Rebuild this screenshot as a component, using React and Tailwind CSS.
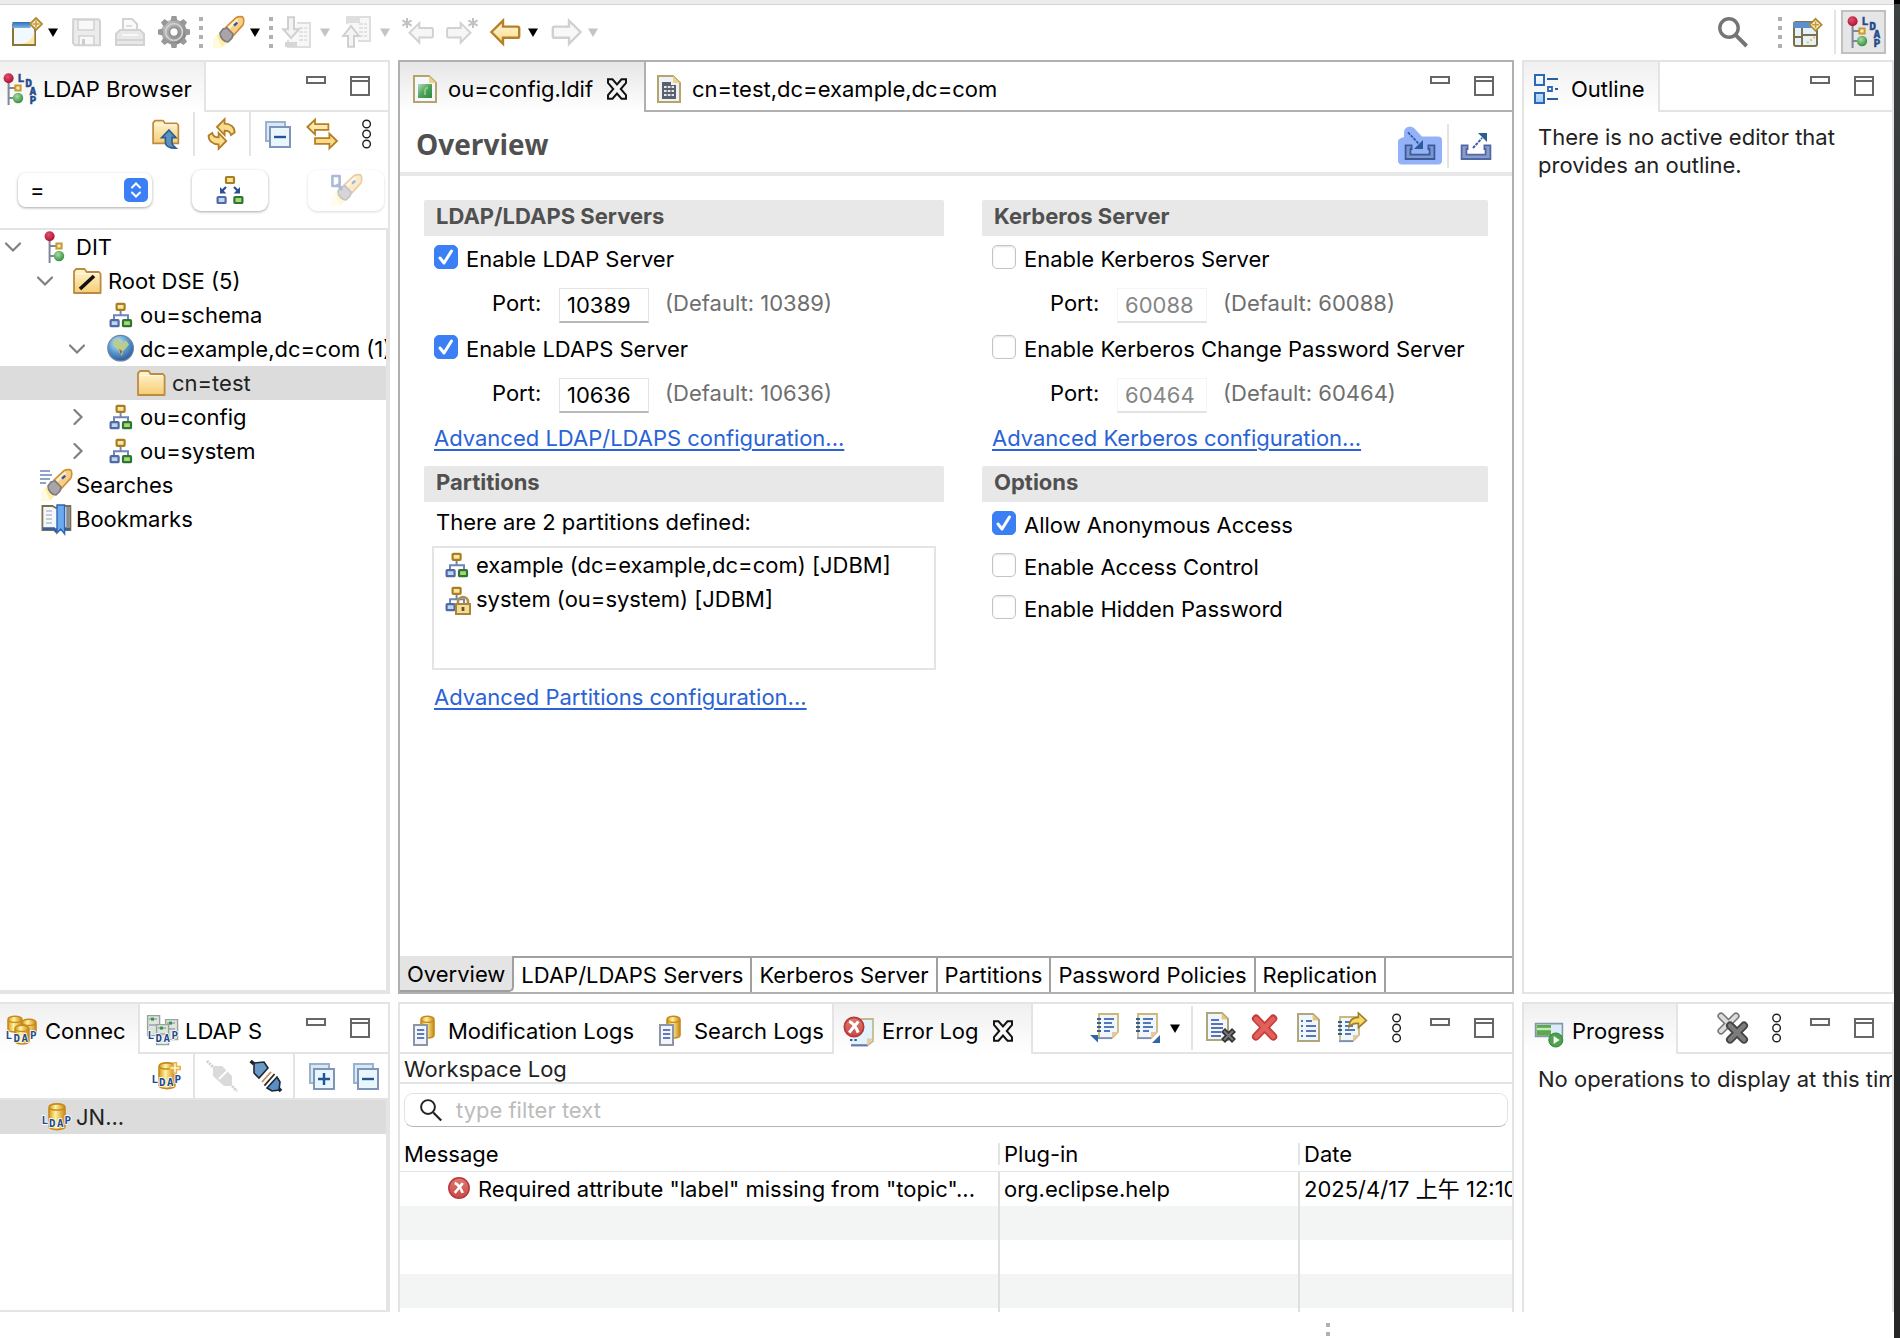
import React, { useState } from "react";

/* ------------------------------------------------------------------ icons */

function Svg({ children, size = "h-8 w-8" }) {
  return (
    <svg viewBox="0 0 16 16" className={`${size} block shrink-0 overflow-visible`} fill="none" aria-hidden="true">
      {children}
    </svg>
  );
}

function Defs() {
  return (
    <svg width="0" height="0" className="absolute" aria-hidden="true">
      <defs>
        <linearGradient id="gold" x1="0" y1="0" x2="0" y2="1">
          <stop offset="0" stopColor="#fffbe6" />
          <stop offset="1" stopColor="#fbd77c" />
        </linearGradient>
        <linearGradient id="folder" x1="0" y1="0" x2="0" y2="1">
          <stop offset="0" stopColor="#fff6d2" />
          <stop offset="1" stopColor="#f6cd74" />
        </linearGradient>
        <linearGradient id="greenBox" x1="0" y1="0" x2="1" y2="1">
          <stop offset="0" stopColor="#b5dcb4" />
          <stop offset="0.5" stopColor="#4da35a" />
          <stop offset="1" stopColor="#2f8a42" />
        </linearGradient>
        <linearGradient id="cyl" x1="0" y1="0" x2="1" y2="0">
          <stop offset="0" stopColor="#d9971c" />
          <stop offset="0.4" stopColor="#fff3a0" />
          <stop offset="1" stopColor="#cc8615" />
        </linearGradient>
        <linearGradient id="blueBar" x1="0" y1="0" x2="0" y2="1">
          <stop offset="0" stopColor="#2f6db4" />
          <stop offset="1" stopColor="#7db4e6" />
        </linearGradient>
        <linearGradient id="gearGrey" x1="0" y1="0" x2="1" y2="1">
          <stop offset="0" stopColor="#bcbcbc" />
          <stop offset="1" stopColor="#858585" />
        </linearGradient>
        <linearGradient id="boxBlue" x1="0" y1="0" x2="0" y2="1">
          <stop offset="0" stopColor="#ffffff" />
          <stop offset="1" stopColor="#9fccf5" />
        </linearGradient>
        <linearGradient id="redX" x1="0" y1="0" x2="0" y2="1">
          <stop offset="0" stopColor="#dd7a70" />
          <stop offset="1" stopColor="#c94a48" />
        </linearGradient>
        <radialGradient id="globe" cx="0.4" cy="0.3" r="0.75">
          <stop offset="0" stopColor="#d5eefb" />
          <stop offset="0.5" stopColor="#5a9ed0" />
          <stop offset="1" stopColor="#2b4f93" />
        </radialGradient>
        <radialGradient id="redBall" cx="0.4" cy="0.35" r="0.7">
          <stop offset="0" stopColor="#e0506c" />
          <stop offset="1" stopColor="#a81030" />
        </radialGradient>
        <radialGradient id="greenBall" cx="0.4" cy="0.35" r="0.7">
          <stop offset="0" stopColor="#a6dba2" />
          <stop offset="1" stopColor="#2f8a3c" />
        </radialGradient>
      </defs>
    </svg>
  );
}

function Letters({ pts, size = 5.4, halo = true }) {
  return (
    <g fill="#1f4a8c" fontFamily="DejaVu Sans Mono, monospace" fontWeight="700" fontSize={size} stroke={halo ? "#ffffff" : "#1f4a8c"} strokeWidth={halo ? 0.8 : 0.25} paintOrder="stroke">
      {pts.map(([c, x, y]) => (
        <text key={c + x} x={x} y={y}>{c}</text>
      ))}
    </g>
  );
}

const Sparkle = ({ x = 12.6, y = 3.4 }) => (
  <g transform={`translate(${x} ${y})`}>
    <path d="M0-3 3 0 0 3-3 0Z" fill="#fdf3d3" stroke="#b08a34" strokeWidth="0.9" />
    <path d="M0-1.7V1.7M-1.7 0H1.7" stroke="#c79a3c" strokeWidth="0.8" />
  </g>
);

const NewWizardIcon = () => (
  <Svg>
    <path d="M1.5 4.5h11v10h-11z" fill="#f1f8fe" stroke="#8c7437" />
    <path d="M1.2 3h9v3h-9z" fill="url(#blueBar)" />
    <path d="M4 14c4 0 8-2 8.200-7v7z" fill="#fbe7a4" />
    <Sparkle x={13} y={4} />
  </Svg>
);
const SaveIcon = () => (
  <Svg>
    <path d="M1.600 1.600h12.800l.6 1v12H2.500l-1-1z" fill="#ececec" stroke="#d2d2d2" />
    <path d="M4 2h8v5H4zM4.500 10h7.500v4.500H4.500z" fill="#f8f8f8" stroke="#d2d2d2" strokeWidth="0.8" />
    <path d="M6 11.500h1.500v3H6z" fill="#cccccc" />
  </Svg>
);
const PrintIcon = () => (
  <Svg>
    <path d="M4.500 8V1.500h4.500l2.500 2.500v4" fill="#fafafa" stroke="#d2d2d2" />
    <path d="M6 5h3M6 7h4" stroke="#d4d4d4" strokeWidth="0.8" />
    <path d="M1 9l2-2h10l2 2v5.500H1z" fill="#e8e8e8" stroke="#d2d2d2" />
    <path d="M4 9.500h8" stroke="#f8f8f8" />
    <path d="M1.500 12h13" stroke="#d4d4d4" />
  </Svg>
);
const GearIcon = () => (
  <Svg>
    <circle cx="8" cy="8" r="4.300" stroke="url(#gearGrey)" strokeWidth="4" fill="none" />
    {[0, 45, 90, 135, 180, 225, 270, 315].map((a) => (
      <path key={a} transform={`rotate(${a} 8 8)`} d="M6.300 2.500 6.800 0h2.400l.5 2.500z" fill="#989898" />
    ))}
    <circle cx="8" cy="8" r="2.200" stroke="#868686" strokeWidth="0.7" fill="#ffffff" />
    <circle cx="8" cy="8" r="4.200" stroke="#d0d0d0" strokeWidth="0.9" />
  </Svg>
);
const Torch = () => (
  <g>
    <path d="M0.500 12 4 8l4.500 4.500L5 15.800H0.500z" fill="#fdf0a6" />
    <path d="M0.500 12 2.500 10 5 15.800H0.500z" fill="#fffbe0" />
    <path d="M7 5.500 12 .8c1-.6 3.300-.7 3.600 0 .4.800.4 3-.3 3.900L10.500 10z" fill="#f9cf86" stroke="#cd8e3c" strokeWidth="0.8" />
    <path d="M8.300 6 12.800 1.800" stroke="#fff0c8" strokeWidth="1.200" />
    <path d="M4 8.500 5.500 6.500l2-.5 3 3-.5 2-2 2c-2 0-4-2-4-4.500z" fill="#a8a4a8" stroke="#7e797f" strokeWidth="0.8" />
    <path d="M11 4.800 12.600 3.300" stroke="#2c5aa8" strokeWidth="1.200" />
  </g>
);
const TorchIcon = () => <Svg><Torch /></Svg>;
const ImportIcon = () => (
  <Svg>
    <path d="M7.500 3.500H14v12H3V12" fill="#f7f7f7" stroke="#dedede" />
    <path d="M1.500 13h6v2.500h-6z" fill="#d6d6d6" />
    <path d="M8.500 6h4M8.500 8h4M8.500 10h4M8.500 12h4" stroke="#dcdcdc" strokeDasharray="2 .6" strokeWidth="0.8" />
    <path d="M3 .6h3v6h2.500L4.500 11 .6 6.600H3z" fill="#f4f4f4" stroke="#d0d0d0" />
  </Svg>
);
const ExportIcon = () => (
  <Svg>
    <path d="M2.500 4V.5H14v12H8" fill="#f7f7f7" stroke="#dedede" />
    <path d="M2 .5h7v3H2z" fill="#dedede" />
    <path d="M8.500 4h4M8.500 6h4M8.500 8h4M8.500 10h4" stroke="#dcdcdc" strokeDasharray="2 .6" strokeWidth="0.8" />
    <path d="M3 15.400h3V10h2.500L4.500 5 .6 10H3z" fill="#f4f4f4" stroke="#d0d0d0" />
  </Svg>
);
const ARROW_LEFT = "M.7 8 6.500 2.300v3h7.300c.5 0 .8.300.8.800v4c0 .5-.3.800-.8.800H6.500v3z";
const AstBackIcon = () => (
  <Svg>
    <path transform="translate(3.200 1.600) scale(.84)" d={ARROW_LEFT} fill="#f6f6f6" stroke="#d2d2d2" strokeWidth="1.200" />
    <path d="M2.500 1v5M.2 2.200l4.600 2.600M4.800 2.200.2 4.800" stroke="#c2c2c2" />
  </Svg>
);
const AstForwardIcon = () => (
  <Svg>
    <g transform="translate(16 0) scale(-1 1)">
      <path transform="translate(3.200 1.600) scale(.84)" d={ARROW_LEFT} fill="#f6f6f6" stroke="#d2d2d2" strokeWidth="1.200" />
      <path d="M2.500 1v5M.2 2.200l4.600 2.600M4.800 2.200.2 4.800" stroke="#c2c2c2" />
    </g>
  </Svg>
);
const BackIcon = () => (
  <Svg><path d={ARROW_LEFT} fill="url(#gold)" stroke="#b4802a" strokeWidth="1.200" /></Svg>
);
const ForwardIcon = () => (
  <Svg><path transform="translate(16 0) scale(-1 1)" d={ARROW_LEFT} fill="#f8f8f8" stroke="#d0d0d0" strokeWidth="1.200" /></Svg>
);
const SearchIcon = ({ size, color = "#757575", width = 1.7 }) => (
  <Svg size={size}>
    <circle cx="6" cy="6" r="4.600" stroke={color} strokeWidth={width} />
    <path d="M9.500 9.700 14.800 15" stroke={color} strokeWidth={width * 1.15} />
  </Svg>
);
const PerspectiveIcon = () => (
  <Svg>
    <rect x="1.500" y="3" width="11.500" height="12" rx="1" fill="#e4f2fd" stroke="#7d7048" />
    <path d="M1.200 3h9v3h-9z" fill="#5c8fd0" />
    <path d="M2 10.500h3.500M5.500 6v9M5.500 9.500H13" stroke="#7d7048" />
    <path d="M8 13.500l4-3" stroke="#e8c65c" strokeDasharray="1 1" />
    <Sparkle x={12.3} y={4.4} />
  </Svg>
);
const Tree3 = ({ x = 0 }) => (
  <g transform={`translate(${x} 0)`}>
    <path d="M2.800 3v13M3 7.500h4M3 12.500h4" stroke="#7f8798" strokeWidth="1" />
    <circle cx="2.800" cy="2.600" r="2.500" fill="url(#redBall)" />
    <path d="M6.200 6.200h2.600v2.600H6.200z" fill="#fff0a8" stroke="#c39a34" />
    <circle cx="7.500" cy="12.500" r="2.600" fill="url(#greenBall)" />
  </g>
);
const LdapPerspectiveIcon = () => (
  <Svg>
    <Tree3 x={-0.5} />
    <Letters halo={false} size={5.6} pts={[["L", 6.8, 4.6], ["D", 10.6, 6.8], ["A", 12.8, 11.2], ["P", 12.8, 15.6]]} />
  </Svg>
);
const DitIcon = () => <Svg><Tree3 x={2} /></Svg>;
const FolderBase = () => (
  <g>
    <path d="M1 14V3.200L2 2h4.300l1 1.500h6.200l.8 1V14z" fill="url(#folder)" stroke="#bd8a42" strokeWidth="0.900" strokeLinejoin="round" />
    <path d="M2 4.300h11.500" stroke="#fff8de" strokeWidth="0.600" />
  </g>
);
const FolderIcon = () => <Svg><FolderBase /></Svg>;
const RootFolderIcon = () => (
  <Svg>
    <FolderBase />
    <path d="M4 12 11 5.500" stroke="#111111" strokeWidth="1.800" />
  </Svg>
);
const FolderUpIcon = () => (
  <Svg>
    <g transform="translate(.6 -.6) scale(.95)"><FolderBase /></g>
    <path d="M9.500 6 13 9.800h-2v2.500c0 1.200 1 2 2 2.800-3.500 0-5.300-1-5.300-3V9.800H5.800z" fill="#5c93bd" stroke="#2a5d92" strokeWidth="0.800" />
  </Svg>
);
const Node = ({ x, y, fill, stroke }) => (
  <rect x={x} y={y} width="4" height="3" rx=".4" fill={fill} stroke={stroke} strokeWidth="1.100" />
);
const OrgIcon = ({ children }) => (
  <Svg>
    <path d="M8.300 5.600v2.500M5 10.600V8.100h7v2.500" stroke="#7085b6" strokeWidth="1" />
    <Node x={6.3} y={2.4} fill="#fbe9a0" stroke="#a97d20" />
    <Node x={3.3} y={10.6} fill="#b8d8f4" stroke="#5468a4" />
    <Node x={9.5} y={10.6} fill="#a8d870" stroke="#2f7538" />
    {children}
  </Svg>
);
const OrgLockIcon = () => (
  <OrgIcon>
    <path d="M9 11V9.500a2.500 2.500 0 0 1 5 0V11" stroke="#b18f45" strokeWidth="1.300" />
    <path d="M8 10.500h7v5H8z" fill="#f4dc94" stroke="#a8853a" />
    <path d="M11.500 12v2" stroke="#6d5520" strokeWidth="1.400" />
  </OrgIcon>
);
const DitButtonIcon = () => (
  <Svg size="h-8 w-8">
    <Node x={6} y={1.5} fill="#fbe9a0" stroke="#a97d20" />
    <Node x={1.8} y={11.5} fill="#b8d8f4" stroke="#5468a4" />
    <Node x={10.2} y={11.5} fill="#a8d870" stroke="#2f7538" />
    <path d="M6 6.500 3.800 8.700M10 6.500l2.200 2.200" stroke="#2c4f96" strokeWidth="1.100" />
    <path d="M3 6.500v3.200h3.200zM13 6.500v3.200H9.800z" fill="#2c4f96" />
  </Svg>
);
const GlobeIcon = () => (
  <Svg>
    <circle cx="8.300" cy="7.600" r="6.400" fill="url(#globe)" stroke="#6d86a8" strokeWidth="0.600" />
    <path d="M5 3.500 7 3l2 2 2-1.200 1.500 2L11 7.500 9.500 9 9 11.500 7.800 10 6.500 7.500 4.500 6z" fill="#b9cd8c" />
    <path d="M7.500 8l1.700 1-.8 2z" fill="#a8603c" />
  </Svg>
);
const SearchesIcon = () => (
  <Svg>
    <path d="M0 1h5M0 3h6M0 5h5M0 7h3" stroke="#8fa2ce" strokeWidth="0.900" />
    <Torch />
  </Svg>
);
const BookmarksIcon = () => (
  <Svg>
    <path d="M1.200 1.500h5L8 2.500l2-1h5.200v12H9L8 14.500 7 13.500H1.200z" fill="#f4f8fd" stroke="#7c6f4c" strokeWidth="0.900" />
    <path d="M1.400 12.800H7l1 1 1-1h6" stroke="#33609e" strokeWidth="1.300" />
    <path d="M3 4h3M3 6h3M3 8h3M3 10h3" stroke="#b9bfc8" strokeWidth="0.800" />
    <path d="M8.500 1h3.800v14.500L10.400 13l-1.900 2z" fill="#6aaaf0" stroke="#2d66b4" strokeWidth="0.700" />
    <path d="M14 2v10.500" stroke="#8c8c90" strokeWidth="1.800" />
  </Svg>
);
const QuickSearchIcon = () => (
  <Svg>
    <g opacity="0.450">
      <Torch />
      <path d="M1.200 1h3.600v5H1.200z" stroke="#4466ae" strokeWidth="1.300" strokeLinejoin="round" />
      <path d="M3.500 5 6 8" stroke="#4466ae" strokeWidth="1.300" />
    </g>
  </Svg>
);
const REFRESH_ARROW = "M5.500 4.500 9.300.6v2.200c3 0 5.200 1.800 5 4.500l-1.800 1.200c-.3-1.500-1.200-2.200-3.200-2.200v2.200z";
const RefreshIcon = () => (
  <Svg>
    <path d={REFRESH_ARROW} fill="#f9dc8c" stroke="#b27d26" strokeWidth="0.900" />
    <path d={REFRESH_ARROW} fill="#f9dc8c" stroke="#b27d26" strokeWidth="0.900" transform="rotate(180 7.800 8)" />
  </Svg>
);
const CollapseIcon = ({ plus }) => (
  <Svg>
    <path d="M2 2h9.500v9.500H2z" fill="#d5eaf8" stroke="#9db0cc" />
    <path d="M4 4.500h10v10H4z" fill="#eaf6fe" stroke="#8094b8" />
    <path d={plus ? "M6 9.500h6M9 6.500v6" : "M6 9.500h6"} stroke="#1f5596" strokeWidth="1.200" />
  </Svg>
);
const LinkIcon = () => (
  <Svg>
    <path d="M.7 4.500 4.500.8v2.300h6.700v2.800H4.500v2.300z" fill="#fde9ab" stroke="#b47f25" strokeWidth="0.900" />
    <path d="M15.500 11.500 11.700 7.800v2.300H4.500v2.800h7.200v2.300z" fill="#fbd98a" stroke="#b47f25" strokeWidth="0.900" />
  </Svg>
);
const MenuIcon = () => (
  <Svg>
    {[3, 8, 13].map((y) => <circle key={y} cx="8.300" cy={y} r="1.900" stroke="#222222" strokeWidth="0.700" fill="#fff" />)}
  </Svg>
);
const MinIcon = () => <Svg><path d="M3.500 3.500h9v3h-9z" stroke="#666666" /></Svg>;
const MaxIcon = () => (
  <Svg><path d="M3.500 3.500h9v9h-9zM3.500 5.500h9" stroke="#666666" /></Svg>
);
const CloseIcon = () => (
  <Svg size="h-6 w-6">
    <path d="M2 1.500h3L8 5l3-3.500h3V4l-3.500 4L14 12v2.500h-3L8 11l-3 3.500H2V12l3.500-4L2 4z" stroke="#111111" strokeWidth="1.300" />
  </Svg>
);
const LdifIcon = () => (
  <Svg>
    <path d="M2.500 1.500h7.500l3.500 3.500v9.500h-11z" fill="#f4f8fc" stroke="#b5a56c" />
    <path d="M10 1.500v3.500h3.500z" fill="#ecd28c" />
    <path d="M4.500 5.500h7v7h-7z" fill="url(#greenBox)" />
    <path d="M8 11V9c0-1 .4-1.500 1.500-1.800" stroke="#8fcb92" strokeWidth="0.900" />
  </Svg>
);
const EntryIcon = () => (
  <Svg>
    <path d="M2.500 1.500h7.500l3.500 3.500v9.500h-11z" fill="#eef3f8" stroke="#b5a56c" />
    <path d="M10 1.500v3.500h3.500z" fill="#ecd28c" />
    <path d="M4.500 4.500h4.500v1.500h2.500v7h-7z" fill="#5a5f6c" />
    <path d="M5.500 7h5M5.500 9h5M5.500 11h5" stroke="#e4e8ee" strokeWidth="0.900" strokeDasharray="1.300 .6" />
  </Svg>
);
const TRAY = "M.8 7.700h3v1.800H3.200v2.800h9.600V9.500h-.6V7.700h3v6.800H.8z";
const ImportConfigIcon = () => (
  <svg viewBox="0 0 22 22" className="block h-11 w-11" fill="none" aria-hidden="true">
    <path d="M3 4a3 3 0 0 1 5-2l4 4.300h8a2 2 0 0 1 2 2v10a2 2 0 0 1-2 2H2a2 2 0 0 1-2-2V9c0-1.500 1.500-2 3-2.500z" fill="#94b2f8" />
    <g transform="translate(3 3)">
      <path d={TRAY} fill="#7f98cc" stroke="#3a5a9c" strokeWidth="0.900" />
      <path d="M2 1.200 7.500 7" stroke="#3557a8" strokeWidth="0.900" strokeDasharray="1.500 .5" />
      <path d="M9.500 5v4.500H5z" fill="#2a5d98" />
    </g>
  </svg>
);
const ExportConfigIcon = () => (
  <Svg>
    <path d={TRAY} fill="#8b9cc8" stroke="#5069a6" strokeWidth="0.900" />
    <path d="M6.500 9 11 4" stroke="#3f5fae" strokeWidth="1" strokeDasharray="1.500 .5" />
    <path d="M9 1.500h4.500V6z" fill="#2a6090" />
  </Svg>
);
const OutlineIcon = () => (
  <Svg>
    <path d="M1.500 1h4.500v5H1.500zM1.500 10h4.500v5H1.500z" fill="url(#boxBlue)" stroke="#2d68b2" />
    <path d="M7.500 3h5.500M7.500 13h5.500M11.500 8h1.500" stroke="#2a609f" />
    <path d="M8 7h2v2H8z" stroke="#2d68b2" strokeWidth="0.900" />
  </Svg>
);
const Cyl = ({ x, y, w = 9, h = 12 }) => (
  <g transform={`translate(${x} ${y})`}>
    <path d={`M.5 2.500C.5 0 ${w - 0.5} 0 ${w - 0.5} 2.500V${h - 2}c0 2-${w - 1} 2-${w - 1} 0z`} fill="url(#cyl)" stroke="#c58a1c" strokeWidth="0.800" />
    <path d={`M.8 2.800c1 1.200 ${w - 2.6} 1.200 ${w - 1.6} 0`} stroke="#c58a1c" strokeWidth="0.700" />
  </g>
);
const ConnectionsIcon = () => (
  <Svg>
    <Cyl x={0.5} y={0} w={8} h={9} />
    <Cyl x={7.5} y={1.5} w={8} h={9} />
    <Cyl x={4} y={4.5} w={8} h={10.5} />
    <Letters pts={[["L", -0.2, 12], ["D", 3.8, 13.6], ["A", 7.8, 13.6], ["P", 12, 12]]} />
  </Svg>
);
const ConnectionIcon = ({ spark }) => (
  <Svg>
    <Cyl x={4} y={0.8} w={9} h={14} />
    <Letters pts={[["L", 0.8, 11.5], ["D", 4.5, 13], ["A", 8.5, 13], ["P", 12.3, 11.5]]} />
    {spark && <path d="M12.500 1v6M9.500 4h6" stroke="#e4b64a" strokeWidth="2.200" />}
    {spark && <path d="M12.500 1.800v4.400M10.300 4h4.400" stroke="#fff6cf" strokeWidth="0.800" />}
  </Svg>
);
const ServersIcon = () => (
  <Svg>
    {[[0.5, 0], [9.5, 2], [5, 4.5]].map(([x, y]) => (
      <g key={x} transform={`translate(${x} ${y})`}>
        <path d="M.3.300h6v10h-6z" fill="#dfe4dc" stroke="#9aa39a" strokeWidth="0.700" />
        <path d="M1 2h4M1 5h4" stroke="#98a4b6" strokeWidth="0.800" />
        <path d="M2 1.300h1.500v1.500H2z" fill="#2f9a3c" />
      </g>
    ))}
    <Letters pts={[["L", 0.8, 12], ["D", 4.8, 13.6], ["A", 8.8, 13.6], ["P", 12.8, 12]]} />
  </Svg>
);
const PlugIcon = ({ off }) => (
  <Svg>
    {off ? (
      <g>
        <path d="M.5.500 4 4M12 12l3.500 3.500" stroke="#cfcfcf" strokeWidth="1.400" strokeDasharray="1 .5" />
        <path d="M4 3h4l5 5v4l-1 1H9L3.500 8V4z" fill="#dadada" />
        <path d="M6.500 9.500l4-4" stroke="#ffffff" />
      </g>
    ) : (
      <g>
        <path d="M.3.500 2 2M14 14l1.500 1.500" stroke="#1d2733" strokeWidth="1.800" />
        <path d="M2 1.500 7 1l2 3-4.500 5L2 6.500z" fill="#6a9ac8" stroke="#1d2733" strokeWidth="0.800" />
        <path d="M8.500 14 13.500 8.500 15 11l-.5 4-3.500.500z" fill="#5b8fc4" stroke="#1d2733" strokeWidth="0.800" />
        <path d="M7.200 12.800 12.300 7" stroke="#2b2b2b" strokeWidth="0.900" />
        <path d="M6 11 10.500 6" stroke="#c98b5a" strokeWidth="0.900" />
      </g>
    )}
  </Svg>
);
const LogsIcon = () => (
  <Svg>
    <Cyl x={5.5} y={0} w={7.5} h={12} />
    <path d="M2.500 5h6.500v10H2.500z" fill="#f2f6fc" stroke="#8b95a8" />
    <path d="M4 7.500h3.600M4 9.500h3.600M4 11.500h3.600" stroke="#5f7ab8" strokeWidth="0.900" />
  </Svg>
);
const ErrorBall = ({ cx, cy, r }) => (
  <g>
    <circle cx={cx} cy={cy} r={r} fill="url(#redX)" stroke="#b8383a" strokeWidth="0.900" />
    <path d={`M${cx - 2.4} ${cy - 2.8}c2.500 1 3.500 3 4.500 5.600M${cx + 2.1} ${cy - 2.8}c-.5 1-3 3.600-4.500 5.600`} stroke="#ffffff" strokeWidth="1.500" />
  </g>
);
const ErrorLogIcon = () => (
  <Svg>
    <path d="M5 2h10v11l-2.500 2H4" fill="#e2f3fd" stroke="#c6ba8c" strokeWidth="0.900" />
    <path d="M4 15.200h8.500" stroke="#5e7ab4" />
    <path d="M12 15.500v-3.800H15z" fill="#ecc8a0" />
    <path d="M3.500 12.500h1.200M5.700 12.500h1.200" stroke="#2f5c9c" />
    <ErrorBall cx={5.5} cy={6} r={4.8} />
  </Svg>
);
const ErrorIcon = () => <Svg size="h-7 w-7"><ErrorBall cx={8} cy={7.4} r={5.8} /></Svg>;
const Notebook = () => (
  <g>
    <path d="M3.500 1.500H13v9l-3 3H3.500z" fill="#eef7fe" stroke="#cdb878" strokeWidth="0.900" />
    <path d="M3 13.600h7" stroke="#7c90bd" strokeWidth="0.900" />
    <path d="M10 13.500v-3h3z" fill="#e6c8a2" />
    <path d="M2.500 4h2M2.500 6h2M2.500 8h2M2.500 10h2" stroke="#325f9c" strokeWidth="1" />
    <path d="M6 4h5M6 6h4M6 8h5M6 10h3" stroke="#5676b6" strokeWidth="0.900" />
  </g>
);
const ExportLogIcon = () => (
  <Svg><g transform="translate(2 -.5)"><Notebook /></g><path d="M1 11.500h4v3.800z" fill="#2f66a8" /></Svg>
);
const ImportLogIcon = () => (
  <Svg><g transform="translate(-.5 -.5)"><Notebook /></g><path d="M14 11.500v4h-4z" fill="#2f66a8" /></Svg>
);
const DocPage = ({ bullets }) => (
  <g>
    <path d="M2.500 1h7.500l3 3v10.500H2.500z" fill="#f0f6fd" stroke="#b0a678" />
    <path d="M9.800 1v3.200h3z" fill="#e8c878" />
    <path d={bullets ? "M6.500 4.500h3M6.500 7h5M6.500 9.500h5M6.500 12h5M4 4.500h1M4 7h1M4 9.500h1M4 12h1" : "M4.500 4.500h4M4.500 6.500h6M4.500 8.500h6M4.500 10.500h5M4.500 12.500h5"} stroke="#5773b5" strokeWidth="0.900" />
  </g>
);
const DeleteLogIcon = () => (
  <Svg>
    <g transform="translate(-1 -.5)"><DocPage /></g>
    <path d="M9.500 9l5.500 5.500M15 9l-5.500 5.500" stroke="#333" strokeWidth="2.800" />
    <path d="M10 9.500l4.500 4.500M14.500 9.500 10 14" stroke="#777" strokeWidth="1" />
  </Svg>
);
const ClearIcon = () => (
  <Svg>
    <path d="M4 3.300l8.600 9M12.600 3.300l-8.600 9" stroke="#c63a3a" strokeWidth="4" strokeLinecap="round" />
    <path d="M4.100 3.500l8.400 8.700M12.500 3.500l-8.400 8.700" stroke="#e0605c" strokeWidth="2.400" strokeLinecap="round" />
  </Svg>
);
const OpenLogIcon = () => <Svg><g transform="translate(.5 0)"><DocPage bullets /></g></Svg>;
const RestoreLogIcon = () => (
  <Svg>
    <g transform="translate(-1.500 1)"><Notebook /></g>
    <path d="M6.500 7.500C6.500 4 8 2.700 11.200 2.700V.5l4 3.700-4 3.600V5.700c-2-.2-3.500.3-4.700 1.800z" fill="#f8d668" stroke="#9c7d28" strokeWidth="0.800" />
  </Svg>
);
const ProgressIcon = () => (
  <Svg>
    <path d="M1.300 4.300h13.400v6.400H1.300z" fill="#dcecf6" stroke="#8496a8" strokeWidth="0.800" />
    <path d="M1.800 5h7.200v5.300H1.800z" fill="#5ba84e" />
    <path d="M2 7h7" stroke="#c8e8b8" strokeWidth="1.200" />
    <circle cx="11.400" cy="12.500" r="3.500" fill="#4fa24c" stroke="#2f7f3c" strokeWidth="0.500" />
    <path d="M10.300 10.500l3 2-3 2z" fill="#ffffff" />
  </Svg>
);
const RemoveAllIcon = () => (
  <Svg>
    <path d="M2.500 2l7.500 7.500M10 2 2.500 9.500" stroke="#777777" strokeWidth="3.600" strokeLinecap="round" />
    <path d="M2.500 2l7.500 7.500M10 2 2.500 9.500" stroke="#dddddd" strokeWidth="2" strokeLinecap="round" />
    <path d="M7 6.800l7 7M14 6.800l-7 7" stroke="#444444" strokeWidth="4" strokeLinecap="round" />
    <path d="M7 6.800l7 7M14 6.800l-7 7" stroke="#7c7c7c" strokeWidth="2.200" strokeLinecap="round" />
  </Svg>
);
const Chevron = ({ open }) => (
  <svg viewBox="0 0 16 16" className="block h-4 w-4" fill="none" aria-hidden="true">
    <path d={open ? "M1 4.500l7 7 7-7" : "M5.500 1l7 7-7 7"} stroke="#808080" strokeWidth="2.200" strokeLinecap="round" />
  </svg>
);

/* --------------------------------------------------------------- controls */

const ToolButton = ({ label, disabled, children }) => (
  <button type="button" aria-label={label} title={label} disabled={disabled} className="flex h-11 w-11 shrink-0 items-center justify-center">
    {children}
  </button>
);
const DropArrow = ({ label, disabled }) => (
  <button type="button" aria-label={label} disabled={disabled} className="flex h-11 w-4 shrink-0 items-center">
    <svg viewBox="0 0 10 10" className={disabled ? "block h-[10px] w-[10px] text-[#c4c4c4]" : "block h-[10px] w-[10px] text-black"} aria-hidden="true">
      <path d="M0 1.500h10L5 10z" fill="currentColor" />
    </svg>
  </button>
);
const Separator = () => <span className="mx-[5px] h-11 w-[2px] shrink-0 bg-[#e4e4e4]" />;
const Dots = () => (
  <span className="flex w-[10px] shrink-0 flex-col items-center gap-[5px]">
    {[0, 1, 2, 3].map((i) => <span key={i} className="h-1 w-1 bg-[#b3b0ac]" />)}
  </span>
);

const WindowButtons = () => (
  <>
    <ToolButton label="Minimize"><MinIcon /></ToolButton>
    <ToolButton label="Maximize"><MaxIcon /></ToolButton>
  </>
);

function Tab({ icon, label, active, closable, dark, className = "" }) {
  const line = dark ? "border-[#b0b0b0]" : "border-[#e4e4e4]";
  return (
    <div
      role="tab"
      aria-selected={!!active}
      className={`flex h-[50px] min-w-0 shrink-0 items-center ${line} ${
        active ? (dark ? "bg-linear-to-b from-[#e6e6e6] to-white pt-1" : "bg-linear-to-b from-[#f0f0f0] to-white pt-1") : "border-b-2 pt-[6px]"
      } ${className}`}
    >
      {icon}
      <span className="ml-[7px] overflow-hidden whitespace-nowrap">{label}</span>
      {closable && (
        <button type="button" aria-label={`Close ${label}`} className="ml-3 shrink-0"><CloseIcon /></button>
      )}
    </div>
  );
}

const TabFill = ({ dark, children, left = true }) => (
  <div className={`flex h-[50px] min-w-0 flex-1 items-start justify-end border-b-2 pt-[2px] pr-[6px] ${left ? "border-l-2" : ""} ${dark ? "border-[#b0b0b0]" : "border-[#e4e4e4]"}`}>
    {children}
  </div>
);

function Panel({ label, dark, children, className = "" }) {
  return (
    <section aria-label={label} className={`flex min-h-0 min-w-0 flex-col overflow-hidden bg-white ${dark ? "border-[#b0b0b0]" : "border-[#e4e4e4]"} ${className}`}>
      {children}
    </section>
  );
}

function Check({ label, defaultChecked }) {
  return (
    <label className="flex h-7 items-center gap-2 pt-px">
      <span className="relative mb-1 block h-6 w-6">
        <input
          type="checkbox"
          defaultChecked={defaultChecked}
          className="peer block h-6 w-6 appearance-none rounded-[5px] border border-[#c4c4c4] bg-white shadow-[inset_0_1px_2px_rgba(0,0,0,0.12)] checked:border-[#3b7ff5] checked:bg-[#3b7ff5] checked:shadow-none"
        />
        <svg viewBox="0 0 24 24" className="pointer-events-none absolute inset-0 hidden h-6 w-6 peer-checked:block" fill="none" aria-hidden="true">
          <path d="M6 13l4 5 7.500-12" stroke="#ffffff" strokeWidth="3" strokeLinecap="round" strokeLinejoin="round" />
        </svg>
      </span>
      <span className="whitespace-nowrap">{label}</span>
    </label>
  );
}

function Port({ id, value, disabled }) {
  return (
    <div className="mt-[15px] mb-[11px] ml-[58px] flex h-[36px] items-center">
      <label htmlFor={id} className="mb-1 w-[67px]">Port:</label>
      <input
        id={id}
        defaultValue={value}
        disabled={disabled}
        className={
          disabled
            ? "h-[35px] w-[90px] border border-b-2 border-[#f4f4f4] border-b-[#e2e2e2] bg-white px-[7px] text-[#868686]"
            : "h-[35px] w-[90px] border border-b-2 border-[#e4e4e4] border-b-[#b8b8b8] bg-white px-[7px] text-black"
        }
      />
      <span className="mb-1 ml-4 whitespace-nowrap text-[#6e6e6e]">(Default: {value})</span>
    </div>
  );
}

const SectionTitle = ({ children }) => (
  <h2 className="h-9 rounded-t-[2px] bg-[#e8e8e8] pl-3 leading-8 font-bold text-[#505050]">{children}</h2>
);
const ConfigLink = ({ children }) => (
  <a href="#configuration" className="whitespace-nowrap text-[#2a63d6] underline decoration-2 underline-offset-[3px]">{children}</a>
);

/* ------------------------------------------------------------------ views */

function MainToolbar() {
  return (
    <div role="toolbar" aria-label="Main" className="flex h-[54px] shrink-0 items-center pr-2 pl-1">
      <ToolButton label="New"><NewWizardIcon /></ToolButton>
      <DropArrow label="New menu" />
      <ToolButton label="Save" disabled><SaveIcon /></ToolButton>
      <ToolButton label="Print" disabled><PrintIcon /></ToolButton>
      <ToolButton label="Build"><GearIcon /></ToolButton>
      <Dots />
      <ToolButton label="Search"><TorchIcon /></ToolButton>
      <DropArrow label="Search menu" />
      <Dots />
      <ToolButton label="Next annotation" disabled><ImportIcon /></ToolButton>
      <DropArrow label="Next annotation menu" disabled />
      <ToolButton label="Previous annotation" disabled><ExportIcon /></ToolButton>
      <DropArrow label="Previous annotation menu" disabled />
      <ToolButton label="Previous edit location" disabled><AstBackIcon /></ToolButton>
      <ToolButton label="Next edit location" disabled><AstForwardIcon /></ToolButton>
      <ToolButton label="Back"><BackIcon /></ToolButton>
      <DropArrow label="Back menu" />
      <ToolButton label="Forward" disabled><ForwardIcon /></ToolButton>
      <DropArrow label="Forward menu" disabled />
      <div className="ml-auto flex items-center">
        <div className="mr-5"><ToolButton label="Quick access"><SearchIcon /></ToolButton></div>
        <Dots />
        <ToolButton label="Open perspective"><PerspectiveIcon /></ToolButton>
        <Separator />
        <button type="button" aria-label="LDAP perspective" aria-pressed="true" className="flex h-11 w-[45px] items-center justify-center border-2 border-[#c0c0c0] bg-[#e6e6e6]">
          <LdapPerspectiveIcon />
        </button>
      </div>
    </div>
  );
}

const TREE = [
  { level: 0, open: true, icon: <DitIcon />, label: "DIT" },
  { level: 1, open: true, icon: <RootFolderIcon />, label: "Root DSE (5)" },
  { level: 2, icon: <OrgIcon />, label: "ou=schema" },
  { level: 2, open: true, icon: <GlobeIcon />, label: "dc=example,dc=com (1)" },
  { level: 3, icon: <FolderIcon />, label: "cn=test", selected: true },
  { level: 2, open: false, icon: <OrgIcon />, label: "ou=config" },
  { level: 2, open: false, icon: <OrgIcon />, label: "ou=system" },
  { level: 0, icon: <SearchesIcon />, label: "Searches" },
  { level: 0, icon: <BookmarksIcon />, label: "Bookmarks" },
];
const INDENT = ["pl-[5px]", "pl-[37px]", "pl-[69px]", "pl-[101px]"];

function BrowserView() {
  return (
    <Panel label="LDAP Browser" className="border-t-2 border-r-2 border-b-2">
      <div className="flex">
        <Tab active icon={<LdapPerspectiveIcon />} label="LDAP Browser" className="w-[204px] pl-1" />
        <TabFill><WindowButtons /></TabFill>
      </div>
      <div className="flex h-11 justify-end">
        <ToolButton label="Up one level"><FolderUpIcon /></ToolButton>
        <Separator />
        <ToolButton label="Refresh"><RefreshIcon /></ToolButton>
        <Separator />
        <ToolButton label="Collapse all"><CollapseIcon /></ToolButton>
        <ToolButton label="Link with editor"><LinkIcon /></ToolButton>
        <ToolButton label="View menu"><MenuIcon /></ToolButton>
      </div>
      <div className="flex h-[72px] shrink-0 items-center gap-10 pr-1 pb-1 pl-[18px]">
        <div className="relative w-[134px]">
          <select aria-label="Filter operator" className="block h-[34px] w-full appearance-none rounded-[8px] bg-white px-3 shadow-[0_1px_3px_rgba(0,0,0,0.35)]">
            <option>=</option>
          </select>
          <svg viewBox="0 0 24 24" className="pointer-events-none absolute top-[5px] right-1 h-6 w-6 rounded-[5px] bg-[#3b7ff5]" fill="none" aria-hidden="true">
            <path d="M8 9.500 12 5.500l4 4M8 14.500l4 4 4-4" stroke="#ffffff" strokeWidth="2" strokeLinecap="round" />
          </svg>
        </div>
        <button type="button" aria-label="Show tree" className="flex h-[41px] w-[76px] items-center justify-center rounded-[9px] bg-white shadow-[0_1px_3px_rgba(0,0,0,0.35)]"><DitButtonIcon /></button>
        <button type="button" aria-label="Quick search" disabled className="flex h-[41px] w-[76px] items-center justify-center rounded-[9px] bg-white shadow-[0_1px_3px_rgba(0,0,0,0.15)]"><QuickSearchIcon /></button>
      </div>
      <ul role="tree" className="min-h-0 flex-1 overflow-hidden border-t-2 border-r-2 border-b-2 border-[#e4e4e4]">
        {TREE.map((row) => (
          <li
            key={row.label}
            role="treeitem"
            aria-selected={!!row.selected}
            className={`flex h-[34px] items-center ${INDENT[row.level]} ${row.selected ? "bg-[#dcdcdc] text-[#222222]" : ""}`}
          >
            <span className="mr-[19px] h-4 w-4 shrink-0">{row.open !== undefined && <Chevron open={row.open} />}</span>
            {row.icon}
            <span className="ml-1 whitespace-nowrap">{row.label}</span>
          </li>
        ))}
      </ul>
    </Panel>
  );
}

const PAGES = ["Overview", "LDAP/LDAPS Servers", "Kerberos Server", "Partitions", "Password Policies", "Replication"];

function EditorArea() {
  const [page, setPage] = useState("Overview");
  return (
    <Panel label="Editor" dark className="border-2">
      <div className="flex shrink-0">
        <Tab dark active closable icon={<LdifIcon />} label="ou=config.ldif" className="w-[244px] pl-[9px]" />
        <Tab dark icon={<EntryIcon />} label="cn=test,dc=example,dc=com" className="border-l-2 pl-[7px]" />
        <TabFill dark left={false}><WindowButtons /></TabFill>
      </div>
      <div className="flex h-[64px] shrink-0 items-center border-b-4 border-[#e8e8e8] pt-1 pr-[14px] pl-4">
        <h1 className="flex-1 font-['Open_Sans'] text-[28px] font-bold text-[#505050]">Overview</h1>
        <div className="flex pt-1">
          <button type="button" aria-label="Import configuration" className="shrink-0"><ImportConfigIcon /></button>
          <Separator />
          <ToolButton label="Export configuration"><ExportConfigIcon /></ToolButton>
        </div>
      </div>
      <div className="grid min-h-0 flex-1 grid-cols-[520fr_506fr] content-start gap-x-[38px] px-6 pt-6">
        <section>
          <SectionTitle>LDAP/LDAPS Servers</SectionTitle>
          <div className="flex h-[230px] flex-col items-start pt-[8px] pl-[10px]">
            <Check label="Enable LDAP Server" defaultChecked />
            <Port id="ldap-port" value="10389" />
            <Check label="Enable LDAPS Server" defaultChecked />
            <Port id="ldaps-port" value="10636" />
            <ConfigLink>Advanced LDAP/LDAPS configuration...</ConfigLink>
          </div>
        </section>
        <section>
          <SectionTitle>Kerberos Server</SectionTitle>
          <div className="flex h-[230px] flex-col items-start pt-[8px] pl-[10px]">
            <Check label="Enable Kerberos Server" />
            <Port id="kerberos-port" value="60088" disabled />
            <Check label="Enable Kerberos Change Password Server" />
            <Port id="kpasswd-port" value="60464" disabled />
            <ConfigLink>Advanced Kerberos configuration...</ConfigLink>
          </div>
        </section>
        <section>
          <SectionTitle>Partitions</SectionTitle>
          <p className="pt-[6px] pl-3 leading-7">There are 2 partitions defined:</p>
          <ul className="mt-[10px] mr-2 ml-2 h-[124px] border-2 border-[#e4e4e4]">
            <li className="flex h-[34px] items-center gap-1 pl-[6px]"><OrgIcon />example (dc=example,dc=com) [JDBM]</li>
            <li className="flex h-[34px] items-center gap-1 pl-[6px]"><OrgLockIcon />system (ou=system) [JDBM]</li>
          </ul>
          <div className="pt-[13px] pl-[10px]"><ConfigLink>Advanced Partitions configuration...</ConfigLink></div>
        </section>
        <section>
          <SectionTitle>Options</SectionTitle>
          <div className="flex flex-col items-start gap-[14px] pt-[8px] pl-[10px]">
            <Check label="Allow Anonymous Access" defaultChecked />
            <Check label="Enable Access Control" />
            <Check label="Enable Hidden Password" />
          </div>
        </section>
      </div>
      <div role="tablist" className="flex h-9 shrink-0">
        {PAGES.map((name) => (
          <button
            key={name}
            type="button"
            role="tab"
            aria-selected={page === name}
            onClick={() => setPage(name)}
            className={
              page === name
                ? "rounded-br-[5px] border-r-2 border-b-2 border-[#a0a0a0] bg-[#e4e4e4] px-[7px] pt-[2px] whitespace-nowrap"
                : "border-t-2 border-r-2 border-[#a0a0a0] px-[7px] whitespace-nowrap"
            }
          >
            {name}
          </button>
        ))}
        <span className="flex-1 border-t-2 border-[#a0a0a0]" />
      </div>
    </Panel>
  );
}

function OutlineView() {
  return (
    <Panel label="Outline" className="border-2">
      <div className="flex">
        <Tab active icon={<OutlineIcon />} label="Outline" className="w-[134px] pl-2" />
        <TabFill><WindowButtons /></TabFill>
      </div>
      <p className="px-[14px] pt-[11px] leading-7 text-[#222222]">There is no active editor that provides an outline.</p>
    </Panel>
  );
}

function ConnectionsView() {
  return (
    <Panel label="Connections" className="border-t-2 border-r-2 border-b-2">
      <div className="flex">
        <Tab active icon={<ConnectionsIcon />} label="Connec" className="w-[138px] pl-[6px]" />
        <Tab icon={<ServersIcon />} label="LDAP S" className="w-[134px] border-l-2 pl-[6px]" />
        <TabFill left={false}><WindowButtons /></TabFill>
      </div>
      <div className="flex h-11 shrink-0 justify-end">
        <ToolButton label="New connection"><ConnectionIcon spark /></ToolButton>
        <Separator />
        <ToolButton label="Open connection" disabled><PlugIcon off /></ToolButton>
        <ToolButton label="Close connection"><PlugIcon /></ToolButton>
        <Separator />
        <ToolButton label="Expand all"><CollapseIcon plus /></ToolButton>
        <ToolButton label="Collapse all"><CollapseIcon /></ToolButton>
      </div>
      <ul role="tree" className="flex-1 border-t-2 border-r-2 border-[#e4e4e4]">
        <li role="treeitem" aria-selected="true" className="flex h-[34px] items-center bg-[#dcdcdc] pl-10 text-[#222222]">
          <ConnectionIcon />
          <span className="ml-1">JN...</span>
        </li>
      </ul>
    </Panel>
  );
}

function LogView() {
  return (
    <Panel label="Error Log" className="border-t-2 border-r-2 border-l-2">
      <div className="flex shrink-0">
        <Tab icon={<LogsIcon />} label="Modification Logs" className="w-[246px] pl-[9px]" />
        <Tab icon={<LogsIcon />} label="Search Logs" className="w-[186px] pl-[9px]" />
        <Tab active closable icon={<ErrorLogIcon />} label="Error Log" className="w-[199px] border-l-2 pl-[9px]" />
        <TabFill>
          <ToolButton label="Export log"><ExportLogIcon /></ToolButton>
          <ToolButton label="Import log"><ImportLogIcon /></ToolButton>
          <DropArrow label="Import log menu" />
          <Separator />
          <ToolButton label="Clear log viewer"><DeleteLogIcon /></ToolButton>
          <ToolButton label="Delete log"><ClearIcon /></ToolButton>
          <ToolButton label="Open log"><OpenLogIcon /></ToolButton>
          <ToolButton label="Restore log"><RestoreLogIcon /></ToolButton>
          <ToolButton label="View menu"><MenuIcon /></ToolButton>
          <WindowButtons />
        </TabFill>
      </div>
      <p className="h-[30px] shrink-0 border-b-2 border-[#e4e4e4] pl-1 leading-[30px] text-[#222222]">Workspace Log</p>
      <label className="mx-1 mt-[9px] flex h-[34px] shrink-0 items-center rounded-[9px] border border-[#e2e2e2] border-b-[#b4b4b4] pl-[14px]">
        <SearchIcon size="h-6 w-6" color="#222222" width={1.3} />
        <input type="text" aria-label="Filter" placeholder="type filter text" className="ml-[13px] w-full bg-transparent outline-none placeholder:text-[#bcbcbc]" />
      </label>
      <table className="mt-[10px] w-full shrink-0 table-fixed border-separate border-spacing-0 text-left">
        <colgroup>
          <col className="w-[600px]" />
          <col className="w-[300px]" />
          <col />
        </colgroup>
        <thead>
          <tr>
            {["Message", "Plug-in", "Date"].map((h, i) => (
              <th key={h} scope="col" className="h-[35px] border-b border-[#e4e4e4] p-0 align-middle font-normal">
                <div className={`h-[22px] pl-1 leading-[22px] ${i < 2 ? "border-r-2 border-[#e4e4e4]" : ""}`}>{h}</div>
              </th>
            ))}
          </tr>
        </thead>
        <tbody>
          <tr className="h-[34px]">
            <td className="border-r-2 border-[#dfdfdf] p-0 pl-[45px]">
              <span className="flex items-center gap-[5px] whitespace-nowrap"><ErrorIcon />Required attribute "label" missing from "topic"...</span>
            </td>
            <td className="border-r-2 border-[#dfdfdf] p-0 pl-1">org.eclipse.help</td>
            <td className="overflow-hidden p-0 pl-1 whitespace-nowrap">2025/4/17 上午 12:10</td>
          </tr>
          {[0, 1, 2, 3].map((i) => (
            <tr key={i} className={i % 2 ? "h-[34px]" : "h-[34px] bg-[#f3f4f4]"}>
              <td className="border-r-2 border-[#dfdfdf] p-0" />
              <td className="border-r-2 border-[#dfdfdf] p-0" />
              <td className="p-0" />
            </tr>
          ))}
        </tbody>
      </table>
    </Panel>
  );
}

function ProgressView() {
  return (
    <Panel label="Progress" className="border-t-2 border-r-2 border-l-2">
      <div className="flex">
        <Tab active icon={<ProgressIcon />} label="Progress" className="w-[152px] pl-[9px]" />
        <TabFill>
          <ToolButton label="Remove all finished operations"><RemoveAllIcon /></ToolButton>
          <ToolButton label="View menu"><MenuIcon /></ToolButton>
          <WindowButtons />
        </TabFill>
      </div>
      <p className="pt-[11px] pl-[14px] leading-7 whitespace-nowrap text-[#222222]">No operations to display at this time.</p>
    </Panel>
  );
}

export default function App() {
  return (
    <div className="flex h-screen overflow-hidden bg-white font-['Inter','Noto_Sans_CJK_TC',sans-serif] text-[22px] leading-7 text-black">
      <Defs />
      <main className="flex min-w-0 flex-1 flex-col">
        <div className="h-[5px] shrink-0 border-b border-[#d2d4d6] bg-[#ececee]" />
        <MainToolbar />
        <div className="mt-px grid min-h-0 flex-1 grid-cols-[390px_minmax(0,1fr)_372px] grid-rows-[minmax(0,1fr)_310px] gap-2">
          <BrowserView />
          <EditorArea />
          <OutlineView />
          <ConnectionsView />
          <LogView />
          <ProgressView />
        </div>
        <footer className="grid h-[26px] shrink-0 grid-cols-[70%_1fr] items-end">
          <span />
          <span className="flex flex-col gap-[5px] pb-[2px]">
            <span className="h-1 w-1 bg-[#b3b0ac]" />
            <span className="h-1 w-1 bg-[#b3b0ac]" />
          </span>
        </footer>
      </main>
      <div className="w-[6px] shrink-0 border-t-4 border-black bg-linear-to-b from-[#3c4242] via-[#2a2a2a] to-[#262626]" />
    </div>
  );
}
